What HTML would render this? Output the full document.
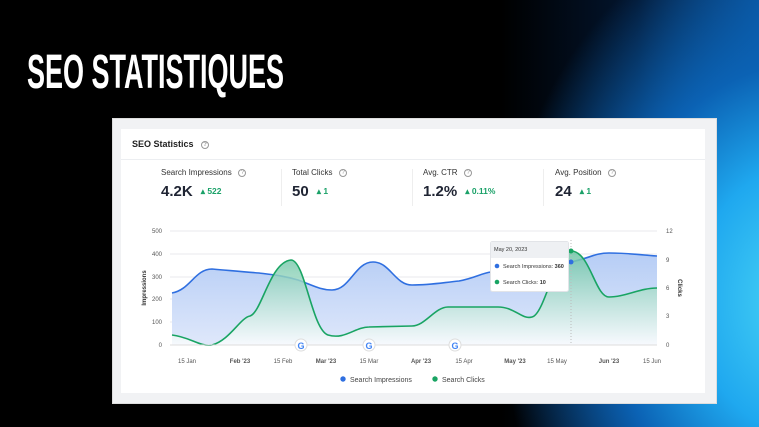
<!DOCTYPE html>
<html><head><meta charset="utf-8"><style>
*{margin:0;padding:0;box-sizing:border-box}
body{width:759px;height:427px;overflow:hidden;position:relative;font-family:"Liberation Sans",sans-serif;
background:radial-gradient(ellipse 300px 380px at 800px 300px,#4ad6f6 0%,#1fa8ef 35%,#0b62b4 62%,rgba(3,20,50,0) 100%),linear-gradient(90deg,#000 0%,#000 66%,#031630 84%,#0a4f96 100%);}
.outer{position:absolute;left:112px;top:118px;width:605px;height:286px;background:#f1f2f4;border:1px solid #ddd}
.card{position:absolute;left:8px;top:10px;width:584px;height:264px;background:#fff}
.q{display:inline-block;width:8px;height:8px;border:1px solid #999;border-radius:50%;font-size:6px;line-height:6px;text-align:center;color:#999;vertical-align:middle}
.h{position:absolute;left:11px;top:10px;font-size:9px;font-weight:bold;color:#222}
.hl{position:absolute;left:0;top:30px;width:584px;height:1px;background:#eceef1}
.st{position:absolute;top:39px;font-size:8px;color:#333}
.st b{display:block;margin-top:6px;font-size:15px;color:#1f2433}
.st b span{font-size:8.5px;color:#1aa168;margin-left:8px;vertical-align:2px}
.dv{position:absolute;top:40px;width:1px;height:37px;background:#eee}
</style></head><body>
<svg style="position:absolute;left:0;top:0" width="759" height="120"><text x="27" y="88" fill="#fff" font-family="Liberation Sans" font-weight="bold" font-size="48" textLength="257" lengthAdjust="spacingAndGlyphs">SEO STATISTIQUES</text></svg>
<div class="outer"><div class="card">
<div class="h">SEO Statistics &nbsp; <span class="q">?</span></div>
<div class="hl"></div>
<div class="st" style="left:40px">Search Impressions &nbsp; <span class="q">?</span><b>4.2K<span>▴ 522</span></b></div>
<div class="dv" style="left:160px"></div>
<div class="st" style="left:171px">Total Clicks &nbsp; <span class="q">?</span><b>50<span>▴ 1</span></b></div>
<div class="dv" style="left:291px"></div>
<div class="st" style="left:302px">Avg. CTR &nbsp; <span class="q">?</span><b>1.2%<span>▴ 0.11%</span></b></div>
<div class="dv" style="left:422px"></div>
<div class="st" style="left:434px">Avg. Position &nbsp; <span class="q">?</span><b>24<span>▴ 1</span></b></div>
</div></div>
<svg style="position:absolute;left:0;top:0" width="759" height="427" font-family="Liberation Sans">
<defs>
<linearGradient id="gb" x1="0" y1="0" x2="0" y2="1"><stop offset="0" stop-color="#b6cdf5"/><stop offset="1" stop-color="#dfe8fb"/></linearGradient>
<linearGradient id="gg" x1="0" y1="0" x2="0" y2="1"><stop offset="0" stop-color="#6cc4a4"/><stop offset="1" stop-color="#ffffff" stop-opacity=".9"/></linearGradient>
</defs>
<g stroke="#e8e9ec" stroke-width="1">
<line x1="170" y1="231" x2="657" y2="231"/><line x1="170" y1="254" x2="657" y2="254"/><line x1="170" y1="277" x2="657" y2="277"/><line x1="170" y1="299" x2="657" y2="299"/><line x1="170" y1="322" x2="657" y2="322"/>
</g>
<g font-size="6" fill="#555">
<text x="162" y="233" text-anchor="end">500</text><text x="162" y="256" text-anchor="end">400</text><text x="162" y="279" text-anchor="end">300</text><text x="162" y="301" text-anchor="end">200</text><text x="162" y="324" text-anchor="end">100</text><text x="162" y="347" text-anchor="end">0</text>
<text x="666" y="233">12</text><text x="666" y="262">9</text><text x="666" y="290">6</text><text x="666" y="318">3</text><text x="666" y="347">0</text>
</g>
<text transform="translate(146,288) rotate(-90)" font-size="6" font-weight="bold" fill="#333" text-anchor="middle">Impressions</text>
<text transform="translate(678,288) rotate(90)" font-size="6" font-weight="bold" fill="#333" text-anchor="middle">Clicks</text>
<path d="M172,293 C190,290 195,269 212,269 C235,271 245,272 259,273 C275,275 285,276 298,280 C312,285 320,290 332,290 C350,290 355,262 373,262 C390,262 395,285 412,285 C430,285 440,283 459,281 C475,278 482,273 491,272 L571,262 C590,258 595,253 609,253 C630,253 640,255 657,256 L657,345 L172,345Z" fill="url(#gb)"/>
<path d="M172,293 C190,290 195,269 212,269 C235,271 245,272 259,273 C275,275 285,276 298,280 C312,285 320,290 332,290 C350,290 355,262 373,262 C390,262 395,285 412,285 C430,285 440,283 459,281 C475,278 482,273 491,272 L571,262 C590,258 595,253 609,253 C630,253 640,255 657,256" fill="none" stroke="#2f6fe0" stroke-width="1.6"/>
<path d="M172,335 C190,337 200,347 212,345 C230,340 240,318 250,316 C262,312 270,262 291,260 C305,260 312,330 328,335 C345,340 355,327 369,327 L412,326 C425,326 435,307 448,307 L498,307 C515,307 522,320 532,317 C545,314 555,251 571,251 C590,251 595,297 609,297 C625,297 640,288 657,288 L657,345 L172,345Z" fill="url(#gg)" opacity=".85"/>
<path d="M172,335 C190,337 200,347 212,345 C230,340 240,318 250,316 C262,312 270,262 291,260 C305,260 312,330 328,335 C345,340 355,327 369,327 L412,326 C425,326 435,307 448,307 L498,307 C515,307 522,320 532,317 C545,314 555,251 571,251 C590,251 595,297 609,297 C625,297 640,288 657,288" fill="none" stroke="#19a463" stroke-width="1.6"/>
<line x1="170" y1="345" x2="657" y2="345" stroke="#ddd"/>
<line x1="571" y1="240" x2="571" y2="345" stroke="#bbb" stroke-dasharray="1,2"/>
<circle cx="571" cy="251" r="2.5" fill="#19a463"/><circle cx="571" cy="262" r="2.5" fill="#2f6fe0"/>
<g font-size="12" font-weight="bold" text-anchor="middle">
<circle cx="301" cy="345" r="6" fill="#fff" stroke="#ddd"/><text x="301" y="349" font-size="9" fill="#4285f4">G</text>
<circle cx="369" cy="345" r="6" fill="#fff" stroke="#ddd"/><text x="369" y="349" font-size="9" fill="#4285f4">G</text>
<circle cx="455" cy="345" r="6" fill="#fff" stroke="#ddd"/><text x="455" y="349" font-size="9" fill="#4285f4">G</text>
</g>
<g font-size="6" fill="#555" text-anchor="middle">
<text x="187" y="363">15 Jan</text><text x="240" y="363" font-weight="bold">Feb '23</text><text x="283" y="363">15 Feb</text><text x="326" y="363" font-weight="bold">Mar '23</text><text x="369" y="363">15 Mar</text><text x="421" y="363" font-weight="bold">Apr '23</text><text x="464" y="363">15 Apr</text><text x="515" y="363" font-weight="bold">May '23</text><text x="557" y="363">15 May</text><text x="609" y="363" font-weight="bold">Jun '23</text><text x="652" y="363">15 Jun</text>
</g>
<circle cx="343" cy="379" r="2.7" fill="#2f6fe0"/><text x="350" y="382" font-size="7" fill="#444">Search Impressions</text>
<circle cx="435" cy="379" r="2.7" fill="#19a463"/><text x="442" y="382" font-size="7" fill="#444">Search Clicks</text>
<rect x="490.5" y="241.5" width="78" height="50" rx="2" fill="#fff" stroke="#e2e4e8"/>
<path d="M491,242 h77 v16 h-77z" fill="#eef0f3"/>
<text x="494" y="251" font-size="5.5" fill="#333">May 20, 2023</text>
<circle cx="497" cy="266" r="2.3" fill="#2f6fe0"/><text x="503" y="268" font-size="5.5" fill="#333">Search Impressions: <tspan font-weight="bold">360</tspan></text>
<circle cx="497" cy="282" r="2.3" fill="#19a463"/><text x="503" y="284" font-size="5.5" fill="#333">Search Clicks: <tspan font-weight="bold">10</tspan></text>
</svg>
</body></html>
